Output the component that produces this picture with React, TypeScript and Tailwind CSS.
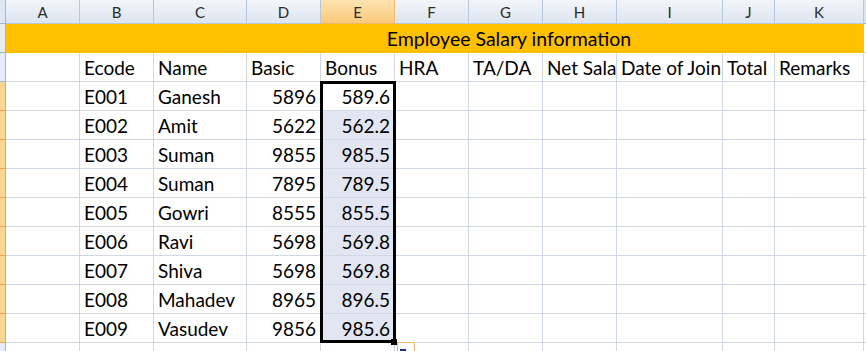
import React from "react";

const columns = ["A", "B", "C", "D", "E", "F", "G", "H", "I", "J", "K"];

const headings = ["Ecode", "Name", "Basic", "Bonus", "HRA", "TA/DA", "Net Sala", "Date of Join", "Total", "Remarks"];

const employees = [
  ["E001", "Ganesh", "5896", "589.6"],
  ["E002", "Amit", "5622", "562.2"],
  ["E003", "Suman", "9855", "985.5"],
  ["E004", "Suman", "7895", "789.5"],
  ["E005", "Gowri", "8555", "855.5"],
  ["E006", "Ravi", "5698", "569.8"],
  ["E007", "Shiva", "5698", "569.8"],
  ["E008", "Mahadev", "8965", "896.5"],
  ["E009", "Vasudev", "9856", "985.6"],
];

const cell = "h-[29px] border-r border-b border-[#d0d7e5] px-[4px] leading-[30px] overflow-hidden whitespace-nowrap";
const stripBlue = "h-[29px] bg-[#e4ecf7] border-r border-b border-[#9eb6ce]";
const stripOrange = "h-[29px] bg-[#f9d592] border-r border-b border-[#f0a440]";

const App = () => {
  return (
    <div className="relative w-[866px] h-[351px] overflow-hidden bg-white text-black font-['Lato',sans-serif] text-[19px]">
      <div className="grid grid-cols-[6px_74px_74px_93px_74px_74px_74px_74px_74px_106px_52px_89px_1fr]">
        {/* column headers */}
        <div className="h-[24px] bg-[#dfe7f2] border-r border-b border-[#9eb6ce]"></div>
        {columns.map((c) => (
          <div
            key={c}
            className={
              c === "E"
                ? "h-[24px] bg-gradient-to-b from-[#fde3b0] to-[#f8c97a] border-r border-b border-[#f2b66d] text-center text-[15px] leading-[24px] text-[#2b2b2b]"
                : "h-[24px] bg-gradient-to-b from-[#f3f6fb] to-[#dce4ef] border-r border-b border-[#b8c8dc] text-center text-[15px] leading-[24px] text-[#2b2b2b]"
            }
          >
            {c}
          </div>
        ))}
        <div className="h-[24px] bg-[#dce4ef] border-b border-[#9eb6ce]"></div>

        {/* title row */}
        <div className={stripBlue}></div>
        <div className="h-[29px] bg-[#ffc000]"></div>
        <div className="h-[29px] bg-[#ffc000]"></div>
        <div className="col-span-9 h-[29px] bg-[#ffc000] text-center text-[19.5px] leading-[30px] whitespace-nowrap">
          Employee Salary information
        </div>
        <div className="h-[29px] border-b border-[#d0d7e5]"></div>

        {/* headings */}
        <div className={stripBlue}></div>
        <div className={cell}></div>
        {headings.map((h) => (
          <div key={h} className={cell}>
            {h}
          </div>
        ))}
        <div className="h-[29px] border-b border-[#d0d7e5]"></div>

        {/* data rows */}
        {employees.map((e, i) => (
          <React.Fragment key={e[0]}>
            <div className={stripOrange}></div>
            <div className={cell}></div>
            <div className={cell}>{e[0]}</div>
            <div className={cell}>{e[1]}</div>
            <div className={cell + " text-right"}>{e[2]}</div>
            <div className={cell + " text-right" + (i > 0 ? " bg-[#e2e6f2]" : "")}>{e[3]}</div>
            <div className={cell}></div>
            <div className={cell}></div>
            <div className={cell}></div>
            <div className={cell}></div>
            <div className={cell}></div>
            <div className={cell}></div>
            <div className="h-[29px] border-b border-[#d0d7e5]"></div>
          </React.Fragment>
        ))}

        {/* next empty row */}
        <div className={stripBlue}></div>
        {columns.map((c) => (
          <div key={"r13" + c} className={cell}></div>
        ))}
        <div className="h-[29px] border-b border-[#d0d7e5]"></div>
      </div>

      {/* selection border E4:E12 */}
      <div className="absolute left-[320px] top-[81px] w-[76px] h-[262px] border-[3px] border-black"></div>
      {/* fill handle */}
      <div className="absolute left-[391px] top-[339px] w-[6px] h-[6px] bg-black"></div>
      {/* paste options tag */}
      <div className="absolute left-[397px] top-[342px] w-[18px] h-[14px] bg-white border border-[#e6b873]">
        <div className="absolute left-[2px] top-[4px] w-[8px] h-[8px] bg-[#1c2f86] border-t-2 border-r-2 border-white"></div>
      </div>
    </div>
  );
};

export default App;
